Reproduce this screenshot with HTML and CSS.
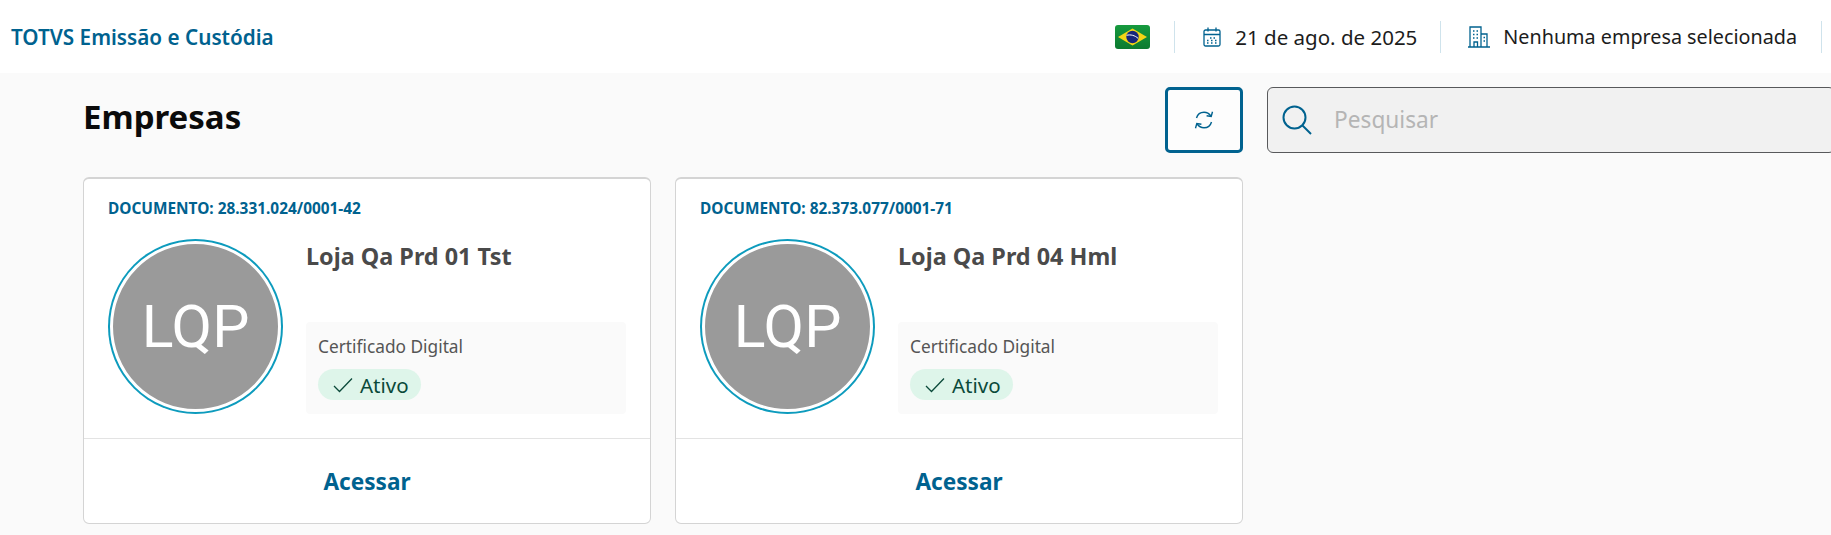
FILE: index.html
```html
<!DOCTYPE html>
<html lang="pt-BR">
	<head>
		<meta charset="UTF-8" />
		<meta name="viewport" content="width=device-width, initial-scale=1.0" />
		<title>TOTVS Emissão e Custódia</title>
		<link rel="stylesheet" href="styles.css">
	</head>
	<body>
		<header class="topbar">
			<div class="brand">TOTVS Emissão e Custódia</div>
			<div class="topbar-items">
				<div class="topbar-item flag-item">
					<svg class="flag" viewBox="0 0 35 24" width="35" height="24">
						<defs>
							<linearGradient id="flagGreen" x1="0" y1="0" x2="0" y2="1">
								<stop offset="0" stop-color="#169a3e"/>
								<stop offset="1" stop-color="#0c7a30"/>
							</linearGradient>
						</defs>
						<rect width="35" height="24" rx="3" fill="url(#flagGreen)"/>
						<polygon points="17.500,3.500 32,12 17.500,20.500 3,12" fill="#f4d516"/>
						<circle cx="17.500" cy="12" r="6.200" fill="#17267a"/>
						<path d="M11.500 10.300c4-1 8.500 0 11.700 3.200" fill="none" stroke="#fff" stroke-width="1"/>
					</svg>
				</div>
				<div class="topbar-item date-item">
					<svg class="icon" viewBox="0 0 18 20" width="18" height="20" fill="none" stroke="#00628f" stroke-width="1.300">
						<rect x="1" y="3" width="16" height="16" rx="1.500"/>
						<path d="M1 7.500h16M5 .5v4M13 .5v4"/>
						<path d="M7 11h1.500M10.500 11H12M4 13.500h1.500M8 13.500h1.500M12 13.500h1.500M4 16h1.500M8 16h1.500M12 16h1.500" stroke-width="1.500"/>
					</svg>
					<span>21 de ago. de 2025</span>
				</div>
				<div class="topbar-item company-item">
					<svg class="icon" viewBox="0 0 24 22" width="24" height="22" fill="none" stroke="#00628f" stroke-width="1.300">
						<path d="M3 21V1h11v20M14 8h6v13M1 21h22M7 21v-5h3.500v5"/>
						<path d="M6 5h1.500M9.500 5H11M6 8.500h1.500M9.500 8.500H11M6 12h1.500M9.500 12H11M16.500 11.500H18M16.500 15H18" stroke-width="1.500"/>
					</svg>
					<span>Nenhuma empresa selecionada</span>
				</div>
			</div>
		</header>

		<main class="page">
			<div class="page-head">
				<h1>Empresas</h1>
				<button class="refresh" type="button" aria-label="Atualizar">
					<svg viewBox="0 0 20 20" width="20" height="20" fill="none" stroke="#00628f" stroke-width="1.400">
						<path d="M2.500 8C3.500 4.500 6.500 2.200 10 2.200c2.800 0 5.200 1.300 6.800 3.800"/>
						<path d="M18.500 1.800 17.200 6.500l-4.600-.8"/>
						<path d="M17.500 12c-1 3.500-4 5.800-7.500 5.800-2.800 0-5.200-1.300-6.800-3.800"/>
						<path d="M1.500 18.200 2.800 13.500l4.600.8"/>
					</svg>
				</button>
			</div>
			<div class="search">
				<svg viewBox="0 0 30 30" width="30" height="30" fill="none" stroke="#00628f" stroke-width="2">
					<circle cx="12.500" cy="12.500" r="11"/>
					<path d="M20.500 20.500 29 29"/>
				</svg>
				<input type="text" placeholder="Pesquisar">
			</div>

			<article class="card">
				<div class="card-body">
					<div class="doc">DOCUMENTO: 28.331.024/0001-42</div>
					<div class="card-main">
						<div class="avatar"><span>LQP</span></div>
						<div class="card-info">
							<div class="name">Loja Qa Prd 01 Tst</div>
							<div class="cert">
								<div class="cert-label">Certificado Digital</div>
								<div class="pill">
									<svg viewBox="0 0 20 16" width="20" height="16" fill="none" stroke="#0b4a3a" stroke-width="1.300"><path d="M1 9l5.500 5.500L19 1.500"/></svg>
									<span>Ativo</span>
								</div>
							</div>
						</div>
					</div>
				</div>
				<div class="card-foot">Acessar</div>
			</article>

			<article class="card">
				<div class="card-body">
					<div class="doc">DOCUMENTO: 82.373.077/0001-71</div>
					<div class="card-main">
						<div class="avatar"><span>LQP</span></div>
						<div class="card-info">
							<div class="name">Loja Qa Prd 04 Hml</div>
							<div class="cert">
								<div class="cert-label">Certificado Digital</div>
								<div class="pill">
									<svg viewBox="0 0 20 16" width="20" height="16" fill="none" stroke="#0b4a3a" stroke-width="1.300"><path d="M1 9l5.500 5.500L19 1.500"/></svg>
									<span>Ativo</span>
								</div>
							</div>
						</div>
					</div>
				</div>
				<div class="card-foot">Acessar</div>
			</article>
		</main>
	</body>
</html>
```

FILE: styles.css
```css
* {
	box-sizing: border-box;
}

html, body {
	height: 100%;
}

body {
	margin: 0;
	overflow: hidden;
	background-color: #fafafa;
	font-family: "Noto Sans", Arial, sans-serif;
	color: #1a1a1a;
}

.topbar {
	display: flex;
	align-items: center;
	justify-content: space-between;
	height: 73px;
	padding: 0 9px 0 11px;
	background-color: #fff;
}

.brand {
	font-size: 20.700px;
	font-weight: 600;
	color: #00628f;
}

.topbar-items {
	display: flex;
	align-items: center;
}

.topbar-item {
	display: flex;
	align-items: center;
	height: 32px;
	border-right: 1px solid #cfe3ec;
	color: #1c1c1c;
}

.flag-item {
	padding-right: 24px;
}

.date-item {
	gap: 14px;
	padding: 0 23px 0 28px;
	font-size: 20.500px;
}

.company-item {
	gap: 12px;
	padding: 0 24px 0 26px;
	font-size: 19.750px;
}

.page {
	display: grid;
	grid-template-columns: 568px 568px 568px;
	column-gap: 24px;
	row-gap: 24px;
	padding: 14px 0 0 83px;
}

.page-head {
	grid-column: 1 / 3;
	display: flex;
	align-items: center;
	justify-content: space-between;
	height: 66px;
}

h1 {
	margin: 0 0 8px;
	font-size: 33px;
	font-weight: 700;
	color: #0b0b0b;
}

.refresh {
	display: flex;
	align-items: center;
	justify-content: center;
	width: 78px;
	height: 66px;
	padding: 0;
	background-color: #fdfdfd;
	border: 3px solid #00628f;
	border-radius: 5px;
	cursor: pointer;
}

.search {
	display: flex;
	align-items: center;
	gap: 20px;
	height: 66px;
	padding-left: 14px;
	background-color: #f1f1f1;
	border: 1px solid #58595b;
	border-radius: 6px;
}

.search input {
	flex: 1;
	margin-top: -2px;
	border: none;
	outline: none;
	background: transparent;
	font-family: inherit;
	font-size: 22.700px;
}

.search input::placeholder {
	color: #b5b5b5;
}

.card {
	display: flex;
	flex-direction: column;
	height: 347px;
	background-color: #fff;
	border: 1px solid #d4d4d4;
	border-top-width: 2px;
	border-radius: 6px;
}

.card-body {
	height: 260px;
	padding: 19px 24px 0;
	border-bottom: 1px solid #e3e3e3;
}

.doc {
	font-size: 15.400px;
	font-weight: 700;
	color: #00628f;
}

.card-main {
	display: flex;
	gap: 23px;
	margin-top: 20px;
}

.avatar {
	display: flex;
	align-items: center;
	justify-content: center;
	flex: none;
	width: 171px;
	height: 171px;
	margin: 2px;
	background-color: #9a9a9a;
	border: 3px solid #fff;
	border-radius: 50%;
	box-shadow: 0 0 0 2px #0d9bbd;
	font-family: Roboto, Arial, sans-serif;
	font-size: 59px;
	color: #fff;
}

.card-info {
	display: flex;
	flex-direction: column;
	justify-content: space-between;
	flex: 1;
}

.name {
	padding-top: 1px;
	font-size: 23.400px;
	font-weight: 700;
	color: #4a4a4a;
}

.cert {
	height: 92px;
	padding: 13px 12px;
	background-color: #fafafa;
	border-radius: 4px;
}

.cert-label {
	font-size: 17.300px;
	color: #555;
}

.pill {
	display: inline-flex;
	align-items: center;
	gap: 7px;
	height: 31px;
	margin-top: 11px;
	padding: 0 12px 0 15px;
	background-color: #def5ea;
	border-radius: 16px;
	font-size: 20.500px;
	color: #0b4a3a;
}

.card-foot {
	display: flex;
	align-items: center;
	justify-content: center;
	flex: 1;
	font-size: 22.600px;
	font-weight: 700;
	color: #00628f;
}
```
